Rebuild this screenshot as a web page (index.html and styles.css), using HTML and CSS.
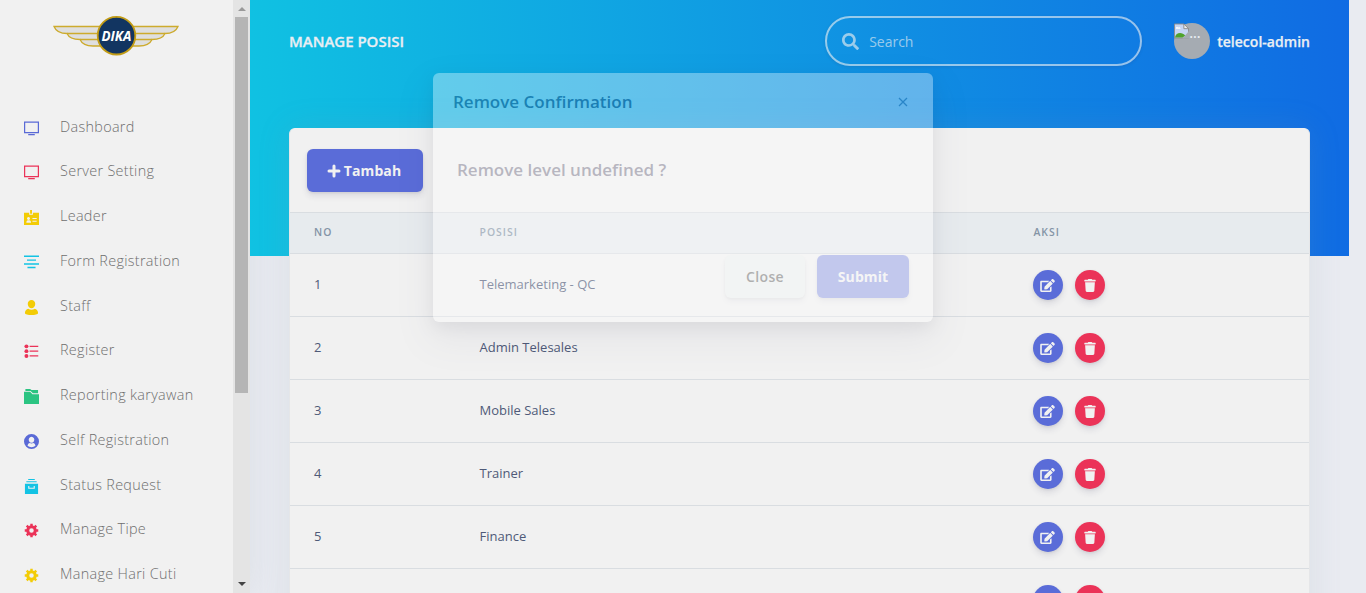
FILE: index.html
```html
<!DOCTYPE html>
<html lang="id">
<head>
<meta charset="utf-8">
<title>Manage Posisi</title>
<link rel="stylesheet" href="styles.css">
</head>
<body>
<svg class="defs" aria-hidden="true">
  <symbol id="tv" viewBox="0 0 16 16"><path fill="currentColor" fill-rule="evenodd" d="M0 .5h16v12.600H0zM1.300 1.900v9.900h13.400V1.900zM4.500 13.900h7v1.300h-7z"/></symbol>
  <symbol id="badge" viewBox="0 0 16 16"><path fill="currentColor" fill-rule="evenodd" d="M0 3h5.500v2h4V3H16v13H0zM6.500 0h2v4h-2zM4.800 7.500a1.600 1.600 0 1 0 .01 0zM2.500 13.500h5c0-2-1-2.500-2.500-2.500s-2.500.5-2.500 2.500zM9 8.500h4.500v1H9zM9 11.500h4.500v1H9z"/></symbol>
  <symbol id="center" viewBox="0 0 16 16"><path fill="currentColor" d="M0 .6h16v1.600H0zM3.200 4.700h9.600v1.400H3.200zM0 8.900h16v1.400H0zM3.700 12.500h8.600v1.500H3.700z"/></symbol>
  <symbol id="person" viewBox="0 0 16 16"><path fill="currentColor" d="M8 0c2.400 0 4 1.800 4 4.200S10.200 8.800 8 8.800 4 6.600 4 4.200 5.600 0 8 0zM4.500 9.300c2 1.300 5 1.300 7 0 2 .7 3.500 2 3.500 4.500 0 1.500-3.500 2.200-7 2.200s-7-.7-7-2.200c0-2.500 1.500-3.800 3.500-4.500z"/></symbol>
  <symbol id="bullets" viewBox="0 0 16 16"><path fill="currentColor" d="M6 1.900h9.200v1.300H6zM6 6.900h9.200v1.300H6zM6 12.100h9.200v1.300H6z"/><circle cx="2.600" cy="2.500" r="2.100" fill="currentColor"/><circle cx="2.600" cy="7.600" r="2.100" fill="currentColor"/><circle cx="2.600" cy="12.700" r="2.100" fill="currentColor"/></symbol>
  <symbol id="folder" viewBox="0 0 16 16"><path fill="currentColor" d="M1.500 0h5L8 1h7v3.600H9.500L7 2H1.500zM0 3h6.500L9 5.500h7V16H0z"/></symbol>
  <symbol id="account" viewBox="0 0 16 16"><path fill="currentColor" fill-rule="evenodd" d="M8 0a8 8 0 1 1 0 16A8 8 0 0 1 8 0zm0 3a3 3.200 0 1 0 .01 0zM3.800 12.500c1 1 2.500 1.500 4.200 1.500s3.200-.5 4.200-1.500C12 10.700 11 10 9.800 9.600c-1 .7-2.600.7-3.600 0C5 10 4 10.700 3.800 12.500z"/></symbol>
  <symbol id="archive" viewBox="0 0 16 16"><path fill="currentColor" fill-rule="evenodd" d="M4.500 0h7v1.100h-7zM2.500 2.300h11v1.200h-11zM1 5h14v11H1zM4.500 7.500v3h7v-3h-1.200v1.700H5.700V7.500z"/></symbol>
  <symbol id="gear" viewBox="0 0 16 16"><path fill="none" stroke="currentColor" stroke-width="3.200" d="M8 4a4 4 0 1 1 0 8 4 4 0 1 1 0-8z"/><path fill="none" stroke="currentColor" stroke-width="2.600" d="M8 .8v2.700M8 12.500v2.700M.8 8h2.700M12.500 8h2.700M2.900 2.900l2 2M11.100 11.100l2 2M2.900 13.100l2-2M11.100 4.900l2-2"/></symbol>
  <symbol id="edit" viewBox="0 0 576 512"><path fill="currentColor" d="M402.600 83.200l90.200 90.200c3.800 3.800 3.800 10 0 13.800L274.400 405.600l-92.800 10.300c-12.400 1.400-22.900-9.100-21.500-21.500l10.300-92.800L388.800 83.200c3.800-3.800 10-3.800 13.800 0zm162-22.900l-48.800-48.800c-15.200-15.200-39.900-15.200-55.200 0l-35.400 35.400c-3.800 3.800-3.800 10 0 13.800l90.200 90.200c3.800 3.800 10 3.800 13.800 0l35.400-35.400c15.200-15.300 15.200-40 0-55.200zM384 346.200V448H64V128h229.800c3.200 0 6.200-1.300 8.500-3.500l40-40c7.600-7.600 2.200-20.500-8.500-20.500H48C21.500 64 0 85.500 0 112v352c0 26.500 21.500 48 48 48h352c26.500 0 48-21.500 48-48V306.200c0-10.700-12.900-16-20.500-8.500l-40 40c-2.200 2.300-3.500 5.300-3.500 8.500z"/></symbol>
  <symbol id="trash" viewBox="0 0 448 512"><path fill="currentColor" d="M432 32H312l-9.400-18.700A24 24 0 0 0 281.100 0H166.800a23.700 23.700 0 0 0-21.400 13.300L136 32H16A16 16 0 0 0 0 48v32a16 16 0 0 0 16 16h416a16 16 0 0 0 16-16V48a16 16 0 0 0-16-16zM53.200 467a48 48 0 0 0 47.900 45h245.800a48 48 0 0 0 47.900-45L416 128H32z"/></symbol>
</svg>

<div class="page">
  <aside class="sidebar">
    <div class="menu">
      <svg class="logo" viewBox="0 0 126 42">
        <g fill="#dfdfdf" stroke="#cdab2d" stroke-width="1.300">
          <path d="M1 11.500h124c-2 5-6 7-13 7-2 4.500-6 6-13 6-2 4.500-6 6.500-13 6.500H40c-7 0-11-2-13-6.500-7 0-11-1.500-13-6-7 0-11-2-13-7z"/>
          <path fill="none" d="M14 18.500h98M27 24.500h72"/>
        </g>
        <circle cx="63.500" cy="20.700" r="18.800" fill="#123561" stroke="#c29c16" stroke-width="1.800"/>
        <text x="63.500" y="26.200" text-anchor="middle" class="logo-text" textLength="30" lengthAdjust="spacingAndGlyphs">DIKA</text>
      </svg>
      <nav class="nav">
        <a class="item"><svg class="violet"><use href="#tv"/></svg>Dashboard</a>
        <a class="item"><svg class="red"><use href="#tv"/></svg>Server Setting</a>
        <a class="item"><svg class="yellow"><use href="#badge"/></svg>Leader</a>
        <a class="item"><svg class="cyan"><use href="#center"/></svg>Form Registration</a>
        <a class="item"><svg class="yellow"><use href="#person"/></svg>Staff</a>
        <a class="item"><svg class="red"><use href="#bullets"/></svg>Register</a>
        <a class="item"><svg class="green"><use href="#folder"/></svg>Reporting karyawan</a>
        <a class="item"><svg class="violet"><use href="#account"/></svg>Self Registration</a>
        <a class="item"><svg class="cyan"><use href="#archive"/></svg>Status Request</a>
        <a class="item"><svg class="red"><use href="#gear"/></svg>Manage Tipe</a>
        <a class="item"><svg class="yellow"><use href="#gear"/></svg>Manage Hari Cuti</a>
      </nav>
    </div>
    <div class="scrollbar"><i class="up"></i><i class="thumb"></i><i class="down"></i></div>
  </aside>

  <main class="main">
    <header class="topbar">
      <h1>Manage Posisi</h1>
      <div class="search">
        <svg viewBox="0 0 512 512"><path fill="currentColor" d="M505 442.700L405.300 343c-4.500-4.500-10.600-7-17-7H372c27.600-35.300 44-79.700 44-128C416 93.100 322.900 0 208 0S0 93.100 0 208s93.100 208 208 208c48.300 0 92.700-16.400 128-44v16.300c0 6.400 2.500 12.500 7 17l99.700 99.700c9.400 9.400 24.600 9.400 33.900 0l28.300-28.300c9.400-9.400 9.400-24.600.1-34zM208 336c-70.700 0-128-57.200-128-128 0-70.700 57.200-128 128-128 70.700 0 128 57.200 128 128 0 70.700-57.200 128-128 128z"/></svg>
        <span>Search</span>
      </div>
      <div class="user">
        <span class="avatar"><svg viewBox="0 0 16 16"><path d="M.5.5h10l5 5v10H.5z" fill="#c6d5f3" stroke="#8c8c8c"/><path d="M2 5.500c0-2 2-2 2.500-1 1-1 2.500 0 2.500 1z" fill="#fff"/><path d="M1 15c1-6 8-6 11-2l-3 2z" fill="#4fa32c"/><path d="M10.500.5v5h5z" fill="#eee" stroke="#8c8c8c"/><path d="M16 8l-7 8h7z" fill="#a5abb2"/></svg>...</span>
        <span class="name">telecol-admin</span>
      </div>
    </header>

    <section class="card">
      <div class="tools"><button class="btn primary"><svg class="plus" viewBox="0 0 14 14"><path stroke="currentColor" stroke-width="3" stroke-linecap="round" d="M7 2v10M2 7h10"/></svg>Tambah</button></div>
      <div class="row head"><span>No</span><span>Posisi</span><span>Aksi</span></div>
      <div class="row"><span>1</span><span>Telemarketing - QC</span><span class="actions"><i class="edit"><svg><use href="#edit"/></svg></i><i class="del"><svg><use href="#trash"/></svg></i></span></div>
      <div class="row"><span>2</span><span>Admin Telesales</span><span class="actions"><i class="edit"><svg><use href="#edit"/></svg></i><i class="del"><svg><use href="#trash"/></svg></i></span></div>
      <div class="row"><span>3</span><span>Mobile Sales</span><span class="actions"><i class="edit"><svg><use href="#edit"/></svg></i><i class="del"><svg><use href="#trash"/></svg></i></span></div>
      <div class="row"><span>4</span><span>Trainer</span><span class="actions"><i class="edit"><svg><use href="#edit"/></svg></i><i class="del"><svg><use href="#trash"/></svg></i></span></div>
      <div class="row"><span>5</span><span>Finance</span><span class="actions"><i class="edit"><svg><use href="#edit"/></svg></i><i class="del"><svg><use href="#trash"/></svg></i></span></div>
      <div class="row"><span></span><span></span><span class="actions"><i class="edit"><svg><use href="#edit"/></svg></i><i class="del"><svg><use href="#trash"/></svg></i></span></div>
    </section>
  </main>
</div>

<div class="modal" role="dialog">
  <div class="modal-head"><h2>Remove Confirmation</h2><svg class="close" viewBox="0 0 10 10"><path stroke="currentColor" stroke-width="1.300" d="M1 1l8 8M9 1l-8 8"/></svg></div>
  <p>Remove level undefined ?</p>
  <div class="modal-foot"><button class="btn light">Close</button><button class="btn primary">Submit</button></div>
</div>
</body>
</html>
```
FILE: styles.css
```css
* { box-sizing: border-box; }
body {
  margin: 0;
  height: 593px;
  overflow: hidden;
  background: #e9ebf1;
  font-family: "Open Sans", sans-serif;
}
h1, h2, p { margin: 0; }
.defs { position: absolute; width: 0; height: 0; }
.page { display: flex; height: 593px; overflow: hidden; }

.sidebar { display: flex; flex: none; width: 250px; box-shadow: 0 0 32px rgba(136, 152, 170, .15); }
.menu { width: 233px; height: 593px; overflow: hidden; background: #f1f1f1; }
.logo { display: block; width: 126px; height: 42px; margin: 15px 0 46.850px 53px; }
.logo-text { font: italic 700 14px "Open Sans", sans-serif; fill: #fff; }
.nav { display: flex; flex-direction: column; }
.item {
  display: flex;
  align-items: center;
  flex: none;
  height: 44.75px;
  padding-left: 24px;
  color: #6e6e6e;
  font-size: 14.4px;
  font-weight: 300;
  letter-spacing: .32px;
}
.item svg { width: 15px; height: 15px; margin: 4px 21px 0 0; }
.item .violet { color: #5a6ad6; }
.item .red { color: #eb3358; }
.item .yellow { color: #f3cc06; }
.item .cyan { color: #13c3e4; }
.item .green { color: #2bc482; }

.scrollbar {
  display: flex;
  flex-direction: column;
  align-items: center;
  width: 17px;
  height: 593px;
  background: #e4e4e4;
}
.up, .down { border: 0 solid transparent; }
.up { margin-top: 7px; border-width: 0 4px 4px; border-bottom-color: #999; }
.down { margin-top: auto; margin-bottom: 7px; border-width: 4px 4px 0; border-top-color: #444; }
.thumb { width: 13px; height: 376px; margin: 6px 0 0; background: #b5b5b5; }

.main {
  width: 1099px;
  height: 593px;
  padding: 0 39px;
  background: linear-gradient(87deg, #10c2e2, #106be3) 0 0 / 100% 256px no-repeat;
}
.topbar { display: flex; align-items: center; height: 82px; margin-bottom: 46px; color: #e9eef3; }
h1 {
  margin-right: auto;
  font-size: 15px;
  font-weight: 600;
  letter-spacing: -.02px;
  text-transform: uppercase;
  -webkit-text-stroke: .3px currentColor;
}
.search {
  display: flex;
  align-items: center;
  width: 317px;
  height: 50px;
  margin-right: 32px;
  padding-left: 15px;
  border: 2px solid rgba(241, 241, 241, .6);
  border-radius: 32px;
  color: rgba(241, 241, 241, .62);
  font-size: 14px;
  box-shadow: 0 1px 3px rgba(50, 50, 93, .15);
}
.search svg { width: 17px; height: 17px; margin-right: 10px; }
.user { display: flex; align-items: center; font-size: 14px; font-weight: 600; }
.name { letter-spacing: .03px; -webkit-text-stroke: .25px currentColor; }
.avatar {
  display: flex;
  align-items: flex-start;
  width: 36px;
  height: 36px;
  margin-right: 7px;
  border-radius: 50%;
  background: #a5abb2;
  line-height: 20px;
}
.avatar svg { flex: none; width: 15px; height: 16px; }

.card {
  height: 560px;
  border: 1px solid #e5e6e8;
  border-top-color: #f1f1f1;
  border-radius: 6px;
  background: #f1f1f1;
  box-shadow: 0 0 32px rgba(136, 152, 170, .15);
}
.tools { height: 83px; padding: 20px 17px; }
.btn {
  display: flex;
  align-items: center;
  justify-content: center;
  height: 43px;
  padding: 0 20px;
  border: 0;
  border-radius: 6px;
  font: 600 14px "Open Sans", sans-serif;
  letter-spacing: .35px;
  box-shadow: 0 4px 6px rgba(50, 50, 93, .11), 0 1px 3px rgba(0, 0, 0, .08);
}
.primary { background: #5a6cd8; color: #f1f1f1; font-weight: 700; letter-spacing: .1px; }
.tools .primary { width: 116px; padding: 0 21px 0 19px; }
.plus { flex: none; width: 14px; height: 14px; margin-right: 3px; }
.row {
  display: grid;
  grid-template-columns: 165.500px 553px 1fr;
  align-items: center;
  height: 63px;
  padding-left: 24px;
  border-top: 1px solid #d9dde1;
  color: #4f5a78;
  font-size: 13px;
}
.row span:not(.actions) { padding-bottom: 2px; }
.head {
  grid-template-columns: 165.500px 554px 1fr;
  height: 41px;
  background: #e7ebee;
  color: #8494a6;
  font-size: 10.400px;
  font-weight: 600;
  letter-spacing: 1px;
  text-transform: uppercase;
}
.actions { display: flex; gap: 12px; }
.actions i {
  display: flex;
  align-items: center;
  justify-content: center;
  width: 30px;
  height: 30px;
  border-radius: 50%;
  color: #f1f1f1;
  box-shadow: 0 4px 6px rgba(50, 50, 93, .11), 0 1px 3px rgba(0, 0, 0, .08);
}
.edit { background: #5a6cd8; }
.del { background: #eb3358; }
.edit svg { width: 15px; height: 13px; margin-top: 1px; }
.del svg { width: 12px; height: 13px; margin-top: 1px; }

.modal {
  position: absolute;
  left: 433px;
  top: 72.700px;
  width: 500px;
  height: 249px;
  padding: 19px 24px 24px;
  border-radius: 6px;
  background: #fff;
  opacity: .34;
  box-shadow: 0 15px 35px rgba(50, 50, 93, .2), 0 5px 15px rgba(0, 0, 0, .17);
}
.modal-head { display: flex; justify-content: space-between; margin: -3px 0 34px -4px; color: #32325d; }
h2 { font-size: 17px; font-weight: 600; line-height: 25px; }
.close { width: 10px; height: 10px; margin: 8px 1px 0 0; color: #5b7898; }
.modal p { height: 97px; padding-top: 9px; color: #4a4663; font-size: 17px; font-weight: 600; line-height: 25px; }
.modal-foot { display: flex; justify-content: flex-end; gap: 12px; margin-top: 10px; }
.light { width: 80px; background: #f6fbfa; color: #333; }
.modal .primary { width: 92px; background: #6a7be8; color: #fff; }
```
